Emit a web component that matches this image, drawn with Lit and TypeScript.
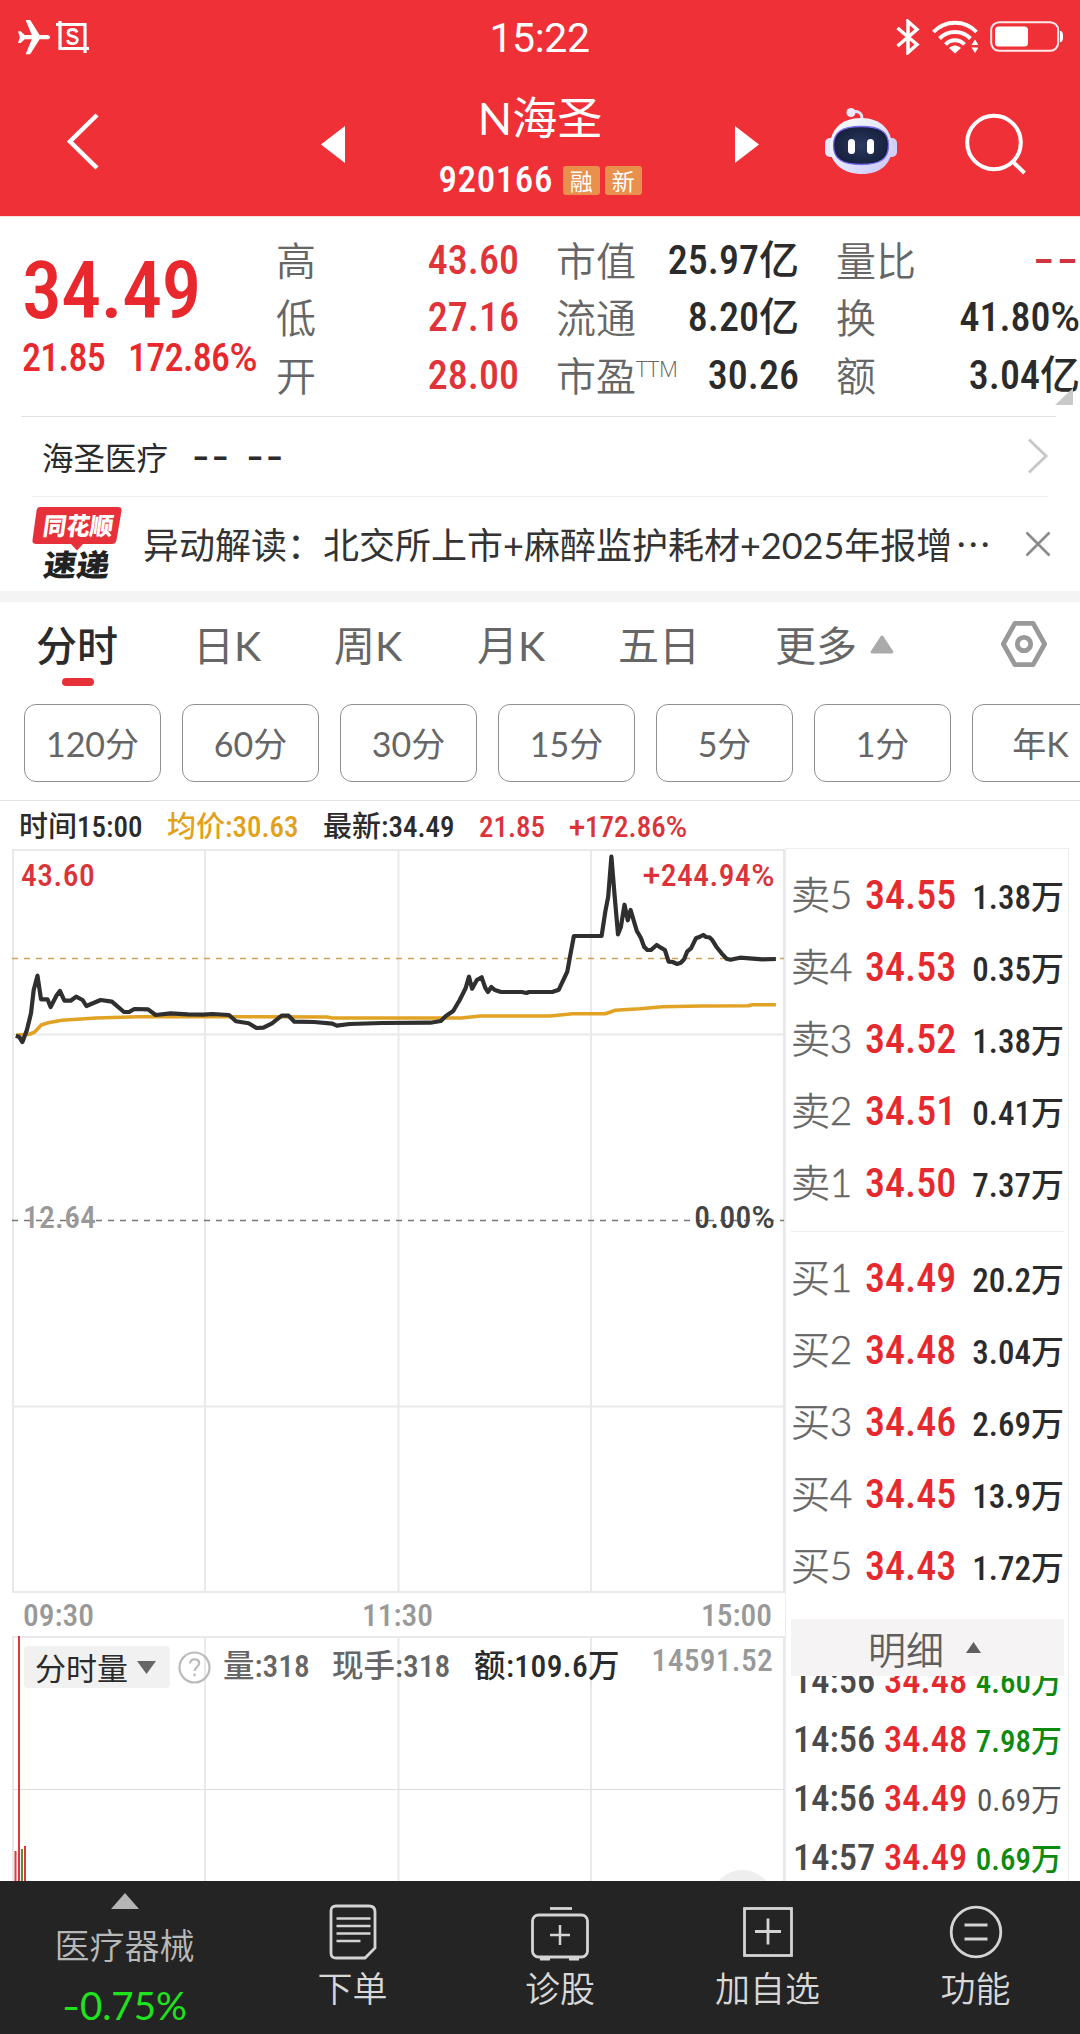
import { LitElement, html, svg, css } from 'lit';
import { customElement } from 'lit/decorators.js';
import { classMap } from 'lit/directives/class-map.js';

interface Level { side: string; price: string; size: string }
interface Tick { time: string; price: string; size: string; tone: string }

const SELLS: Level[] = [
  { side: '卖5', price: '34.55', size: '1.38万' },
  { side: '卖4', price: '34.53', size: '0.35万' },
  { side: '卖3', price: '34.52', size: '1.38万' },
  { side: '卖2', price: '34.51', size: '0.41万' },
  { side: '卖1', price: '34.50', size: '7.37万' },
];
const BUYS: Level[] = [
  { side: '买1', price: '34.49', size: '20.2万' },
  { side: '买2', price: '34.48', size: '3.04万' },
  { side: '买3', price: '34.46', size: '2.69万' },
  { side: '买4', price: '34.45', size: '13.9万' },
  { side: '买5', price: '34.43', size: '1.72万' },
];
const TICKS: Tick[] = [
  { time: '14:56', price: '34.48', size: '4.60万', tone: 'sell' },
  { time: '14:56', price: '34.48', size: '7.98万', tone: 'sell' },
  { time: '14:56', price: '34.49', size: '0.69万', tone: 'flat' },
  { time: '14:57', price: '34.49', size: '0.69万', tone: 'sell' },
];

type Pt = [number, number];
/* Each series is kept in two parts, sampled at different horizontal resolutions. */
const plot = (early: Pt[], late: Pt[]) =>
  [
    ...early.map(([x, y]) => [x / 2.904, 840 + y / 3]),
    ...late.map(([x, y]) => [440 + x / 2.45, 840 + y / 3]),
  ]
    .map(([x, y]) => `${x.toFixed(1)},${y.toFixed(1)}`)
    .join(' ');

const PRICE = plot(
  [[46, 587], [55, 590], [65, 606], [78, 570], [90, 520], [98, 450], [109, 407], [119, 478], [138, 478], [147, 501], [165, 465], [174, 453], [187, 482], [205, 482], [221, 470], [240, 480], [251, 498], [292, 480], [325, 485], [360, 516], [375, 516], [390, 507], [430, 508], [452, 525], [495, 520], [545, 523], [590, 524], [617, 522], [665, 525], [685, 544], [722, 550], [745, 564], [765, 563], [790, 550], [818, 527], [838, 527], [855, 545], [912, 546], [965, 551], [978, 557], [1015, 552], [1110, 549], [1250, 548], [1280, 543], [1295, 528], [1316, 513], [1335, 480], [1352, 445], [1362, 410], [1371, 446], [1385, 420], [1399, 412], [1409, 443], [1417, 456], [1427, 441], [1437, 450], [1455, 456], [1515, 456]],
  [[212, 459], [218, 456], [275, 456], [291, 449], [312, 395], [320, 340], [328, 288], [396, 288], [405, 215], [412, 170], [420, 50], [428, 170], [436, 283], [443, 262], [452, 194], [460, 241], [467, 210], [482, 272], [492, 293], [500, 320], [508, 330], [517, 330], [531, 315], [541, 323], [551, 330], [560, 365], [570, 366], [581, 372], [590, 368], [598, 358], [606, 334], [615, 325], [627, 295], [637, 290], [645, 285], [652, 291], [660, 292], [667, 300], [677, 320], [690, 340], [702, 356], [712, 359], [735, 353], [790, 358], [823, 357]],
);
const AVERAGE = plot(
  [[48, 585], [85, 583], [100, 577], [120, 555], [140, 548], [180, 541], [280, 534], [400, 530], [665, 530], [950, 531], [965, 534], [1340, 534], [1395, 528]],
  [[270, 528], [325, 521], [405, 521], [430, 511], [490, 506], [545, 500], [640, 498], [755, 497], [765, 494], [823, 494]],
);

const shared = css`
  :host { display: block; box-sizing: border-box; }
  * { box-sizing: border-box; }
  svg { display: block; }
  .num { font-family: 'Roboto Condensed', 'Noto Sans CJK SC', sans-serif; font-weight: 500; }
  .wide { font-family: Roboto, sans-serif; }
`;

@customElement('status-bar')
class StatusBar extends LitElement {
  static styles = [shared, css`
    .bar { height: 72px; display: grid; grid-template-columns: 1fr auto 1fr; align-items: center; padding: 0 17px 2px 16px; color: #fff; }
    .left, .right { display: flex; align-items: center; }
    .left { gap: 5px; }
    .right { justify-content: flex-end; gap: 12px; }
    .clock { font: 400 41px/70px Roboto, sans-serif; padding-top: 3px; letter-spacing: -0.4px; }
  `];
  render() {
    return html`<div class="bar">
      <div class="left">
        <svg width="35" height="36" viewBox="0 0 35 36"><path fill="#fff" d="M2 12.500l2.600-.3 4.200 3.800 7 .1L9.600 1h4.600l9.400 15h7.200c4.400.3 4.400 4 0 4.300h-7.200l-9.400 15H9.600l6.200-15.100-7 .1-4.200 3.800-2.600-.3 1.900-5.600z"/></svg>
        <svg width="33" height="34" viewBox="0 0 33 34" fill="none" stroke="#fff" stroke-width="3.200"><path d="M0 4.500h29V33M4 1v27.500h29"/><path stroke-width="2.800" d="M21 12.500c-.6-2-2.300-3-4.500-3-2.600 0-4.500 1.300-4.500 3.400 0 4.600 9.300 2.200 9.300 7 0 2.200-2 3.700-4.800 3.700-2.600 0-4.500-1.200-5-3.500"/></svg>
      </div>
      <div class="clock">15:22</div>
      <div class="right">
        <svg width="24" height="36" viewBox="0 0 24 36" fill="none" stroke="#fff" stroke-width="3.500"><path d="M1.500 9L21 25.500 12 33.500v-31L21 10.500 1.500 27"/></svg>
        <svg width="46" height="34" viewBox="0 0 46 34" fill="none" stroke="#fff" stroke-width="4"><path d="M1.500 12a29.500 29.500 0 0 1 43 0M7.500 18.500a21.500 21.500 0 0 1 31 0M13.500 24.500a13 13 0 0 1 19 0"/><path fill="#fff" stroke="none" d="M17 28c3-3.500 9-3.500 12 0l-6 5.500zM39.500 25l3.500-5.500 3.500 5.500zM39.500 27.500h7l-3.500 5.500z"/></svg>
        <svg width="73" height="32" viewBox="0 0 73 32" fill="none"><rect x="1.200" y="1.200" width="67" height="28.600" rx="8" stroke="#fff" stroke-opacity=".9" stroke-width="2"/><rect x="5" y="5.500" width="33" height="20" rx="3.500" fill="#fff"/><path fill="#fff" d="M70 10h1c3 2 3 9 0 11h-1z"/></svg>
      </div>
    </div>`;
  }
}

@customElement('title-bar')
class TitleBar extends LitElement {
  static styles = [shared, css`
    .bar { height: 144px; display: grid; grid-template-columns: 321px 24px 390px 24px 65px 74px 67px 62px; color: #fff; padding-top: 35px; align-items: start; }
    .back { padding: 6px 0 0 66px; }
    .arrow { padding-top: 19px; }
    .center { text-align: center; margin-top: -14px; }
    .name { font: 400 45px/50px Lato, 'Noto Sans CJK SC', sans-serif; }
    .sub { display: flex; justify-content: center; align-items: center; margin-top: 22px; height: 30px; }
    .code { font-size: 37px; line-height: 30px; margin-right: 10px; letter-spacing: .6px; }
    .tag { width: 36.500px; height: 29px; border-radius: 3px; background: #e8904c; font: 400 23px/28px 'Noto Sans CJK SC', sans-serif; }
    .tag + .tag { margin-left: 5.500px; }
    .robot { grid-column: 6; }
    .search { grid-column: 8; padding-top: 6px; }
  `];
  render() {
    return html`<div class="bar">
      <div class="back"><svg width="34" height="58" viewBox="0 0 34 58" fill="none" stroke="#fff" stroke-width="4.500"><path d="M31 2L4 28.500 31 55"/></svg></div>
      <div class="arrow"><svg width="24" height="37" viewBox="0 0 24 37"><path fill="#fff" d="M24 0v37L0 18.500z"/></svg></div>
      <div class="center">
        <div class="name">N海圣</div>
        <div class="sub"><span class="code num">920166</span><span class="tag">融</span><span class="tag">新</span></div>
      </div>
      <div class="arrow"><svg width="24" height="37" viewBox="0 0 24 37"><path fill="#fff" d="M0 0v37l24-18.500z"/></svg></div>
      <svg class="robot" width="74" height="68" viewBox="0 0 74 68">
        <defs>
          <linearGradient id="shell" x1="0" y1="0" x2="1" y2="1"><stop offset="0" stop-color="#fff"/><stop offset=".55" stop-color="#dfe4fb"/><stop offset="1" stop-color="#c9c2f8"/></linearGradient>
          <radialGradient id="face"><stop offset="0" stop-color="#2c3a5e"/><stop offset="1" stop-color="#17213f"/></radialGradient>
        </defs>
        <path d="M27 6c6-3 11-1 11 6" fill="none" stroke="#e4e2f6" stroke-width="3"/>
        <circle cx="27" cy="5.500" r="4.500" fill="#eceafa"/>
        <rect x="1" y="31" width="12" height="19" rx="5" fill="#e6e9fb"/><rect x="61" y="31" width="12" height="19" rx="5" fill="#cfd0fa"/>
        <path d="M37 11c20 0 31 12 31 29S56 67 38 67 6 57 6 40s11-29 31-29z" fill="url(#shell)"/>
        <path d="M37 19.500c19 0 27.500 5 27.500 18.500S57 57.500 37.500 57.500 9.500 52 9.500 38.500 18 19.500 37 19.500z" fill="url(#face)" stroke="#7a6af0" stroke-width="1.300"/>
        <rect x="24" y="32" width="7" height="15" rx="3.500" fill="#fff"/><rect x="43" y="32" width="7" height="15" rx="3.500" fill="#fff"/>
      </svg>
      <div class="search"><svg width="62" height="62" viewBox="0 0 62 62" fill="none" stroke="#fff" stroke-width="4"><circle cx="29" cy="29.500" r="26.800"/><path d="M47 48L59.500 60"/></svg></div>
    </div>`;
  }
}

@customElement('quote-panel')
class QuotePanel extends LitElement {
  static styles = [shared, css`
    .panel { position: relative; height: 200px; display: grid; grid-template-columns: 276px 243px 37px 243px 37px 244px; padding-top: 15px; border-top: 1px solid #fde0d8; }
    .last { color: #e8282d; padding-left: 22px; white-space: nowrap; }
    .price { font-size: 80px; line-height: 84px; padding-top: 17px; letter-spacing: -.7px; }
    .change { font-size: 38px; line-height: 44px; display: grid; grid-template-columns: 106px auto; letter-spacing: -.7px; margin-top: 3px; }
    .col { display: grid; grid-template-rows: repeat(3, 57.300px); }
    .c1 { grid-column: 2; } .c2 { grid-column: 4; } .c3 { grid-column: 6; }
    .row { display: flex; justify-content: space-between; font-size: 40px; line-height: 57px; white-space: nowrap; }
    .k { font-family: 'Noto Sans CJK SC', sans-serif; font-weight: 350; color: #666; line-height: 54px; }
    .k sup { font: 300 22px/22px 'Open Sans', sans-serif; vertical-align: 14px; }
    .v { color: #2b2b2b; }
    .red { color: #e0333a; }
    .none { font: 400 48px/54px Inter, sans-serif; letter-spacing: 1.500px; color: #cf3540; }
    .corner { position: absolute; right: 7px; bottom: 11px; }
  `];
  row(k: unknown, v: unknown, red = false) {
    return html`<div class="row"><span class="k">${k}</span><span class=${classMap({ v: true, num: true, red })}>${v}</span></div>`;
  }
  render() {
    return html`<div class="panel">
      <div class="last num"><div class="price">34.49</div><div class="change"><span>21.85</span><span>172.86<span class="wide">%</span></span></div></div>
      <div class="col c1">${this.row('高', '43.60', true)}${this.row('低', '27.16', true)}${this.row('开', '28.00', true)}</div>
      <div class="col c2">${this.row('市值', '25.97亿')}${this.row('流通', '8.20亿')}${this.row(html`市盈<sup>TTM</sup>`, '30.26')}</div>
      <div class="col c3"><div class="row"><span class="k">量比</span><span class="none">--</span></div>${this.row('换', html`41.80<span class="wide">%</span>`)}${this.row('额', '3.04亿')}</div>
      <svg class="corner" width="18" height="17" viewBox="0 0 18 17"><path fill="#c9c9c9" d="M18 0v17H0z"/></svg>
    </div>`;
  }
}

@customElement('news-panel')
class NewsPanel extends LitElement {
  static styles = [shared, css`
    .company { height: 80px; margin: 0 24px 0 21px; padding: 0 7px 2px 21px; border-top: 1.500px solid #e2e2e2; display: flex; align-items: center; color: #2b2b2b; }
    .label { font: 400 31.500px/40px 'Noto Sans CJK SC', sans-serif; margin-right: 24px; }
    .none { font: 500 38px/40px Inter, sans-serif; letter-spacing: 2px; margin-right: 15px; }
    .more { margin-left: auto; }
    .flash { height: 95px; margin: 0 32px; border-top: 1px solid #eee; display: flex; align-items: center; }
    .logo { margin: 0 21px 0 0; overflow: visible; }
    .headline { flex: 1; font: 400 36px/50px Lato, 'Noto Sans CJK SC', sans-serif; color: #333; white-space: nowrap; margin-top: -1px; }
    .dots { font-family: 'Noto Sans CJK SC', sans-serif; margin-left: 3px; }
    .band { height: 11px; background: #f4f4f5; }
    .mark { font-family: 'Noto Sans CJK SC', sans-serif; font-weight: 900; }
    .close { margin-right: -3px; }
  `];
  render() {
    return html`
      <div class="company"><span class="label">海圣医疗</span><span class="none">--</span><span class="none">--</span>
        <svg class="more" width="22" height="36" viewBox="0 0 22 36" fill="none" stroke="#c8c8c8" stroke-width="3"><path d="M2 1.500l17 16.500L2 34.500"/></svg></div>
      <div class="flash">
        <svg class="logo" width="90" height="74" viewBox="0 0 90 74">
          <path fill="#e8303a" d="M8 0h78q4 0 3.500 4l-5 29q-.7 4-4.500 4H51l-6 6.500L39 37H4q-4 0-3.500-4l4-29Q5 0 8 0z"/>
          <g class="mark" transform="skewX(-8)"><text x="14" y="28" font-size="24.500" textLength="70" lengthAdjust="spacingAndGlyphs" fill="#fff">同花顺</text><text x="20" y="69.500" font-size="30" textLength="66" lengthAdjust="spacingAndGlyphs" fill="#222">速递</text></g>
        </svg>
        <div class="headline">异动解读：北交所上市+麻醉监护耗材+2025年报增<span class="dots">…</span></div>
        <svg class="close" width="26" height="26" viewBox="0 0 26 26" stroke="#8a8a8a" stroke-width="2.600"><path d="M1.500 1.500l23 23M24.500 1.500l-23 23"/></svg>
      </div>
      <div class="band"></div>`;
  }
}

@customElement('period-tabs')
class PeriodTabs extends LitElement {
  static styles = [shared, css`
    .tabs { height: 102px; display: grid; grid-template-columns: 157px 141px 143px 141px 157px 224px 1fr; padding: 19px 0 0 36px; font: 400 41px/50px Lato, 'Noto Sans CJK SC', sans-serif; color: #666; }
    .tab { white-space: nowrap; }
    .active { color: #2b2b2b; font-weight: 500; }
    .active::after { content: ''; display: block; width: 32px; height: 8px; border-radius: 4px; background: #e83038; margin: 7px 0 0 26px; }
    .drop { display: flex; gap: 13px; align-items: flex-start; }
    .drop svg { margin-top: 14px; }
    .gear { margin: -1px 0 0 1px; }
    .chips { height: 97px; display: flex; gap: 21px; padding-left: 24px; overflow: hidden; border-bottom: 1px solid #e3e3e3; }
    .chip { flex: none; width: 137px; height: 78px; border: 1px solid #8f8f8f; border-radius: 12px; text-align: center; font: 400 34px/78px Lato, 'Noto Sans CJK SC', sans-serif; color: #666; }
    .info { height: 48px; display: grid; grid-template-columns: 148px 156px 156px 90px auto; padding-left: 19px; font-size: 29px; line-height: 53px; color: #2b2b2b; white-space: nowrap; }
    .avg { color: #e0a11b; } .red { color: #dc333b; }
  `];
  render() {
    return html`
      <div class="tabs">
        <span class="tab active">分时</span><span class="tab">日K</span><span class="tab">周K</span><span class="tab">月K</span><span class="tab">五日</span>
        <span class="tab drop">更多<svg width="24" height="19" viewBox="0 0 24 19"><path fill="#aaa" d="M10.500 1.500q1.500-2 3 0L23 16q1 2.500-1.500 2.500h-19Q0 18.500 1 16z"/></svg></span>
        <svg class="gear" width="48" height="48" viewBox="0 0 50 50" fill="none" stroke="#999" stroke-width="5" stroke-linejoin="round"><path d="M15.500 3.500h19L46.500 25l-12 21.500h-19L3.500 25z"/><circle cx="25" cy="25" r="7"/></svg>
      </div>
      <div class="chips">${['120分', '60分', '30分', '15分', '5分', '1分', '年K'].map((t) => html`<span class="chip">${t}</span>`)}</div>
      <div class="info num"><span>时间15:00</span><span class="avg">均价:30.63</span><span>最新:34.49</span><span class="red">21.85</span><span class="red"><span class="wide">+</span>172.86<span class="wide">%</span></span></div>`;
  }
}

@customElement('intraday-chart')
class IntradayChart extends LitElement {
  static styles = [shared, css`
    :host { width: 785px; }
    .num { font-size: 31.500px; }
    .grid { stroke: #e9e9eb; stroke-width: 2; fill: none; }
    .thin { stroke: #dedede; stroke-width: 1; fill: none; }
    .axis { height: 43px; display: flex; justify-content: space-between; padding: 0 13px 0 23px; color: #999; line-height: 45px; }
    .volume { display: grid; height: 260px; }
    .volume > * { grid-area: 1 / 1; }
    .legend { display: grid; grid-template-columns: 146px 8px 45px 109px 142px 150px 1fr; padding: 10px 12px 0 24px; color: #666; line-height: 41px; white-space: nowrap; align-items: start; }
    .picker { grid-column: 1; height: 42px; background: #f1f1f1; border-radius: 4px; display: flex; align-items: center; padding-left: 11px; gap: 9px; color: #2b2b2b; font: 400 31px/42px 'Noto Sans CJK SC', sans-serif; }
    .help { grid-column: 3; margin-top: 5px; }
    .dark { color: #2b2b2b; letter-spacing: .4px; }
    .peak { color: #999; text-align: right; line-height: 30px; letter-spacing: .3px; }
  `];
  render() {
    return html`
      <svg width="785" height="744" viewBox="0 849 785 744">
        <path class="grid" d="M13 850H784V1592H13zM205 850V1592M398.500 850V1592M591 850V1592M13 1034.500H784M13 1406.500H784"/>
        <path d="M12 958.500H784" stroke="#cba352" stroke-width="1.700" stroke-dasharray="6 6"/>
        <path d="M12 1220.500H784" stroke="#777" stroke-width="1.400" stroke-dasharray="6 6"/>
        <polyline points=${AVERAGE} fill="none" stroke="#e2a224" stroke-width="3.600" stroke-linejoin="round"/>
        <polyline points=${PRICE} fill="none" stroke="#2f2f2f" stroke-width="4.200" stroke-linejoin="round"/>
        <g class="num">
          <text x="21" y="886" fill="#dc333b" letter-spacing=".5">43.60</text>
          <text x="775" y="886" fill="#dc333b" text-anchor="end" letter-spacing=".5"><tspan class="wide">+</tspan>244.94<tspan class="wide">%</tspan></text>
          <text x="23" y="1228" fill="#999" letter-spacing=".3">12.64</text>
          <text x="775" y="1228" fill="#444" text-anchor="end" letter-spacing=".3">0.00<tspan class="wide">%</tspan></text>
        </g>
      </svg>
      <div class="axis num"><span>09:30</span><span>11:30</span><span>15:00</span></div>
      <div class="volume">
        <svg width="785" height="260" viewBox="0 1635 785 260">
          <path class="grid" d="M13 1895V1636H784V1895M205 1636V1895M398.500 1636V1895M591 1636V1895"/><path class="thin" d="M13 1788.500H784"/>
          <path d="M15.500 1850V1895M19 1635V1895M25 1845V1895" stroke="#d9383c" stroke-width="2"/><path d="M22 1848V1895" stroke="#5f8a3a" stroke-width="2"/>
          <circle cx="742.500" cy="1900.500" r="31.500" fill="#efeeef"/>
        </svg>
        <div class="legend num">
          <div class="picker">分时量<svg width="19" height="13" viewBox="0 0 19 13"><path fill="#666" d="M0 0h19l-9.500 13z"/></svg></div>
          <svg class="help" width="33" height="33" viewBox="0 0 33 33" fill="none" stroke="#bbb" stroke-width="2.200"><circle cx="16.500" cy="16.500" r="15"/><path d="M12 12.500c.2-2.600 2-4.200 4.600-4.200 2.700 0 4.600 1.600 4.600 4 0 3.400-4.600 3.700-4.600 7.700M16.600 22.500v2.700"/></svg>
          <span>量:318</span><span>现手:318</span><span class="dark">额:109.6万</span><span class="peak">14591.52</span>
        </div>
      </div>`;
  }
}

@customElement('order-book')
class OrderBook extends LitElement {
  static styles = [shared, css`
    :host { flex: 1; }
    .book { width: 284px; margin-top: -1px; border: 1px solid #ededef; border-bottom: 0; height: 1040px; padding: 9px 4px 0 5px; overflow: hidden; }
    .level { height: 72px; display: grid; grid-template-columns: 74px 90px 1fr; align-items: baseline; line-height: 72px; }
    .side { font: 300 39px/72px Lato, 'Noto Sans CJK SC', sans-serif; color: #666; letter-spacing: -.2px; -webkit-text-stroke: .5px #666; }
    .price { font-size: 40px; color: #e5292e; }
    .size { font-size: 33px; color: #2b2b2b; text-align: right; }
    .divider { height: 10px; border-top: 1px solid #ededef; margin: 13px 0 0; }
    .head { height: 57px; margin-top: 18px; background: #f5f3f4; color: #5f5f5f; display: flex; align-items: center; justify-content: center; gap: 22px; font: 350 38px/55px 'Noto Sans CJK SC', sans-serif; padding-right: 6px; }
    .ticks { height: 210px; overflow: hidden; }
    .list { margin-top: -25.500px; }
    .tick { height: 59px; display: grid; grid-template-columns: 91px 81px 1fr; padding: 0 2px 0 2px; align-items: baseline; line-height: 59px; font-size: 36.500px; color: #4a4a4a; }
    .tick .price { font-size: 36.500px; }
    .tick .size { font-size: 31px; }
    .size.sell { color: #0e8a0e; } .size.flat { color: #555; font-weight: 400; }
  `];
  level = (l: Level) => html`<div class="level num"><span class="side">${l.side}</span><span class="price">${l.price}</span><span class="size">${l.size}</span></div>`;
  render() {
    return html`<div class="book">
      ${SELLS.map(this.level)}
      <div class="divider"></div>
      ${BUYS.map(this.level)}
      <div class="head">明细<svg width="15" height="11" viewBox="0 0 15 11"><path fill="#5f5f5f" d="M7.500 0L15 11H0z"/></svg></div>
      <div class="ticks"><div class="list">${TICKS.map((t) => html`<div class="tick num"><span>${t.time}</span><span class="price">${t.price}</span><span class="size ${t.tone}">${t.size}</span></div>`)}</div></div>
    </div>`;
  }
}

const NAV_ICONS = [
  { label: '下单', art: svg`<path d="M8 2h33q6 0 6 6v36L37 54H8q-5 0-5-5V7q0-5 5-5z"/><path stroke-width="2.500" d="M8.500 14.500h34M8.500 22h34M8.500 29.500h34M8.500 37h24"/>` },
  { label: '诊股', art: svg`<path d="M15 4.500h22"/><rect x="-2.500" y="11" width="55" height="42" rx="6"/><path stroke-width="2.500" d="M15 31h20M25 21v20"/><path stroke-width="4" d="M5 54.500h10M34 54.500h10"/>` },
  { label: '加自选', art: svg`<rect x="1.500" y="4.500" width="47" height="47"/><path d="M12 27.500h26M25 14.500v26"/>` },
  { label: '功能', art: svg`<circle cx="25" cy="28" r="24.800"/><path d="M13.500 21h23M13.500 35h23"/>` },
];

@customElement('bottom-nav')
class BottomNav extends LitElement {
  static styles = [shared, css`
    .nav { height: 153px; background: #242424; display: grid; grid-template-columns: 249px 207px 208px 207px 209px; color: #d8d8d8; text-align: center; font: 350 35px/44px 'Noto Sans CJK SC', sans-serif; }
    .sector { padding-top: 12px; color: #b8b8b8; }
    .sector svg { margin: 0 auto; }
    .name { margin-top: 13px; }
    .pct { font: 400 38.500px/44px Lato, sans-serif; color: #1ee41e; margin-top: 17px; }
    .dash { font-family: Inter, sans-serif; }
    .item svg { margin: 23px auto 5px; overflow: visible; }
  `];
  render() {
    return html`<div class="nav">
      <div class="sector"><svg width="28" height="16" viewBox="0 0 28 16"><path fill="#b5b5b5" d="M14 0l14 16H0z"/></svg><div class="name">医疗器械</div><div class="pct"><span class="dash">-</span>0.75%</div></div>
      ${NAV_ICONS.map((i) => html`<div class="item"><svg width="50" height="56" viewBox="0 0 50 56" fill="none" stroke="#d4d4d4" stroke-width="2.800">${i.art}</svg>${i.label}</div>`)}
    </div>`;
  }
}

@customElement('app-root')
class AppRoot extends LitElement {
  static styles = css`
    :host { display: flex; flex-direction: column; width: 1080px; height: 2034px; background: #fff; overflow: hidden; }
    .top { background: #ef3036; flex: none; }
    .body { flex: 1; min-height: 0; overflow: hidden; }
    .market { display: flex; align-items: flex-start; }
  `;
  render() {
    return html`
      <header class="top"><status-bar></status-bar><title-bar></title-bar></header>
      <main class="body">
        <quote-panel></quote-panel>
        <news-panel></news-panel>
        <period-tabs></period-tabs>
        <div class="market"><intraday-chart></intraday-chart><order-book></order-book></div>
      </main>
      <bottom-nav></bottom-nav>`;
  }
}
